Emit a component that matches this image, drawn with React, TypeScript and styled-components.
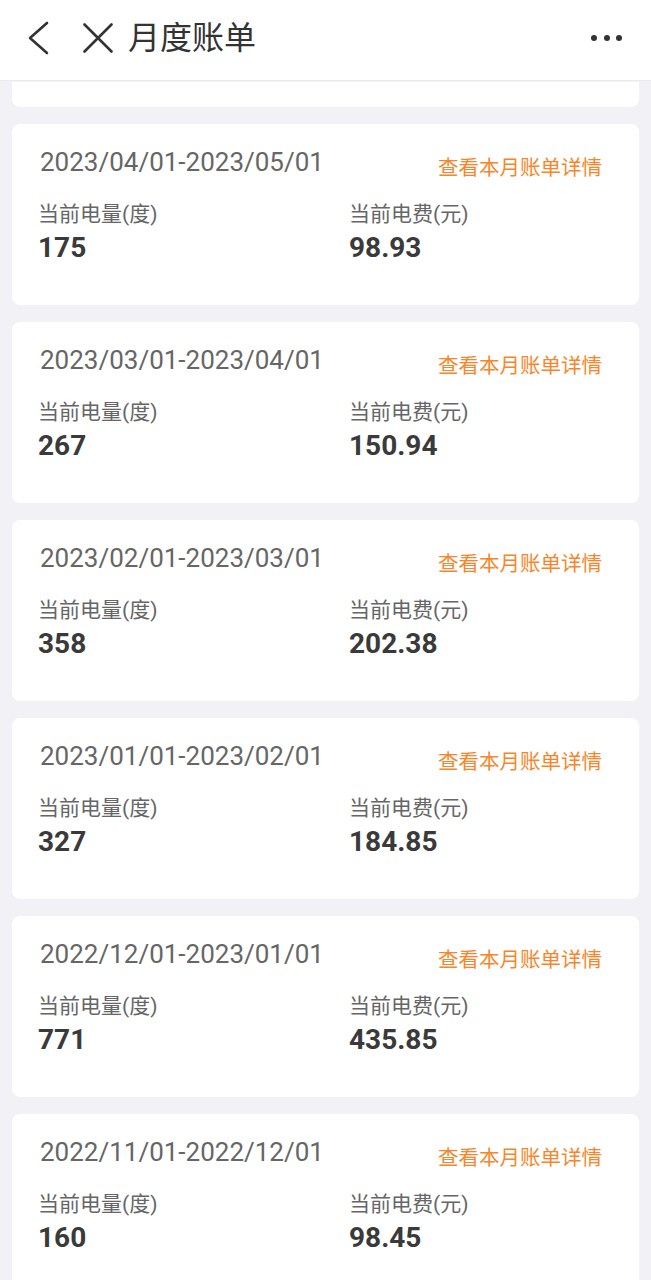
import React from 'react';
import styled, { createGlobalStyle } from 'styled-components';

const bills = [
  { period: '2023/04/01-2023/05/01', usage: '175', fee: '98.93' },
  { period: '2023/03/01-2023/04/01', usage: '267', fee: '150.94' },
  { period: '2023/02/01-2023/03/01', usage: '358', fee: '202.38' },
  { period: '2023/01/01-2023/02/01', usage: '327', fee: '184.85' },
  { period: '2022/12/01-2023/01/01', usage: '771', fee: '435.85' },
  { period: '2022/11/01-2022/12/01', usage: '160', fee: '98.45' },
];

export default function App() {
  return (
    <>
      <GlobalStyle />
      <Page>
        <Header>
          <IconButton aria-label='返回'>
            <svg width='24' height='34' viewBox='0 0 24 34'>
              <path d='M21 2 L4 17 L21 32' fill='none' stroke='#333' strokeWidth='2.6' strokeLinecap='round' strokeLinejoin='round' />
            </svg>
          </IconButton>
          <CloseButton aria-label='关闭'>
            <svg width='30' height='30' viewBox='0 0 30 30'>
              <path d='M1.5 1.5 L28.5 28.5 M28.5 1.5 L1.5 28.5' fill='none' stroke='#333' strokeWidth='2.6' strokeLinecap='round' />
            </svg>
          </CloseButton>
          <Title>月度账单</Title>
          <More>
            <Dot />
            <Dot />
            <Dot />
          </More>
        </Header>
        <List>
          <PartialCard />
          {bills.map((b) => (
            <Card key={b.period}>
              <TopRow>
                <Period>{b.period}</Period>
                <DetailLink>查看本月账单详情</DetailLink>
              </TopRow>
              <Stats>
                <Stat>
                  <Label>当前电量(度)</Label>
                  <Value>{b.usage}</Value>
                </Stat>
                <Stat>
                  <Label>当前电费(元)</Label>
                  <Value>{b.fee}</Value>
                </Stat>
              </Stats>
            </Card>
          ))}
        </List>
      </Page>
    </>
  );
}

const GlobalStyle = createGlobalStyle`
  html, body {
    margin: 0;
    padding: 0;
    background: #f1f1f6;
    font-family: Roboto, "Noto Sans CJK SC", sans-serif;
  }
  * { box-sizing: border-box; }
`;

const Page = styled.div`
  width: 651px;
  min-height: 1280px;
  background: #f1f1f6;
`;

const Header = styled.header`
  height: 81px;
  background: #fff;
  border-bottom: 1px solid #ebebeb;
  display: flex;
  align-items: center;
  padding: 0 29px 4px 26px;
`;

const IconButton = styled.div`
  width: 24px;
  height: 34px;
  display: flex;
  align-items: center;
  justify-content: center;
`;

const CloseButton = styled.div`
  width: 30px;
  height: 30px;
  margin-left: 33px;
  display: flex;
`;

const Title = styled.h1`
  margin: 0 0 0 15px;
  font-size: 32px;
  font-weight: 400;
  color: #333;
  line-height: 40px;
`;

const More = styled.div`
  margin-left: auto;
  display: flex;
  gap: 6.5px;
`;

const Dot = styled.span`
  width: 6px;
  height: 6px;
  border-radius: 50%;
  background: #333;
`;

const List = styled.main`
  padding: 0 12px;
  display: flex;
  flex-direction: column;
  gap: 17px;
`;

const PartialCard = styled.div`
  height: 25px;
  margin-top: 1px;
  background: #fff;
  border-radius: 0 0 8px 8px;
`;

const Card = styled.section`
  height: 181px;
  background: #fff;
  border-radius: 8px;
  padding: 23px 37px 0 26px;
`;

const TopRow = styled.div`
  display: flex;
  justify-content: space-between;
  align-items: flex-start;
`;

const Period = styled.div`
  padding-left: 2px;
  font-size: 26px;
  line-height: 30px;
  color: #666;
`;

const DetailLink = styled.a`
  margin-top: 6px;
  font-size: 20.5px;
  line-height: 30px;
  color: #f7862a;
  cursor: pointer;
`;

const Stats = styled.div`
  display: grid;
  grid-template-columns: 311px 1fr;
  margin-top: 17px;
`;

const Stat = styled.div`
  display: flex;
  flex-direction: column;
`;

const Label = styled.div`
  font-size: 21px;
  line-height: 28px;
  color: #666;
`;

const Value = styled.div`
  margin-top: 3px;
  font-size: 28px;
  line-height: 34px;
  font-weight: 700;
  color: #3a3a3a;
`;
